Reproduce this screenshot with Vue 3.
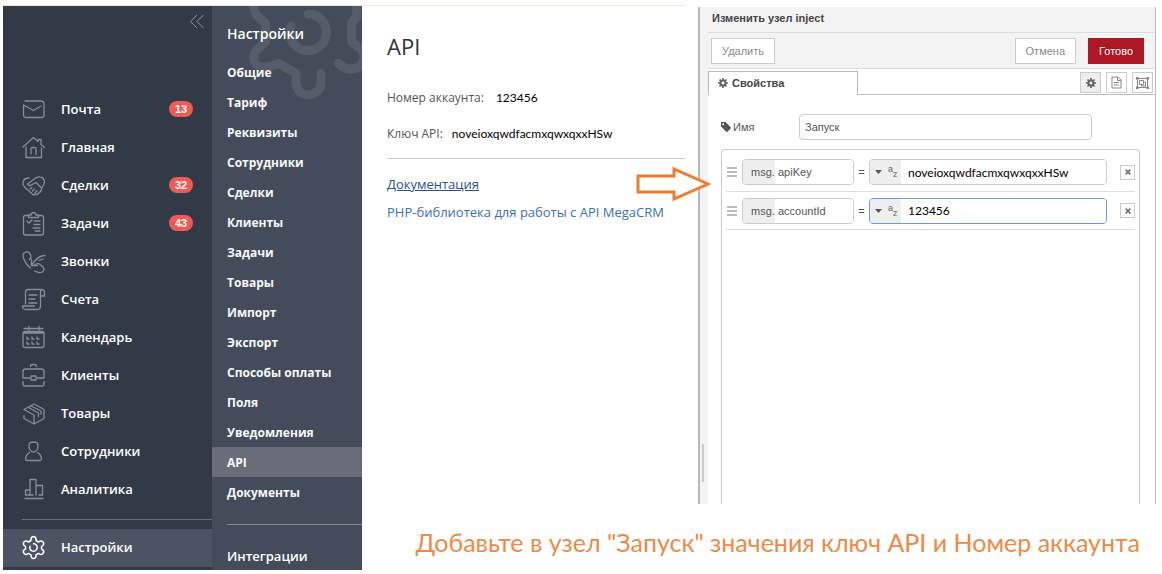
<script setup>
import { ref } from 'vue'

const menu = [
  { label: 'Почта', badge: 13, paths: ['M4 4h16q3 0 3 3v11q0 2.500-2.500 2.500H5Q2.500 20.500 2.500 18V8l10 5.500L20 9'] },
  { label: 'Главная', paths: ['M2 12 12.500 2.500 17 6.500V4.500h3v5l3.500 3', 'M5 12v10.500h15.500V13', 'M10 19v-5q0-1.500 1.500-1.500h2q1.500 0 1.500 1.500v5.500'] },
  { label: 'Сделки', badge: 32, paths: ['M8 5Q3 5 2 9q-.5 3 2 5.500L12.500 22l1.500-1', 'M12 7 6.500 11q1 2 3 1.300L15 9.500l5.500 5.500q3-3 3-6.500-.5-4-4.500-4.500-3-.5-7 3', 'M9 16l2-1.500M11.500 18l2-2M14 20l2-2.500M14.500 21.500q1.500 1 2-.8 1.500.3 1.800-1.500 1.600 0 1.500-1.800 1.500-.4.700-2.400'] },
  { label: 'Задачи', badge: 43, paths: ['M7 4.500H4.500q-2 0-2 2V22q0 2 2 2h16q2 0 2-2V6.500q0-2-2-2H18', 'M7.500 6.500V4H10Q10.500 1.500 12.500 1.500T15 4h2.500v2.500zM6 10l2 2 3-3M13 10h6M13 13.500h6M12 17h7M14 20h5'] },
  { label: 'Звонки', paths: ['M8.500 10.500 10 8.500Q10.500 7 8 3.500 6 2 3 4 1.500 5.500 2.500 9 4.500 15 9.500 19M13.500 22q5 2.500 8 1 2.500-2.500.500-5l-3.500-3q-2-1-4.500.5', 'M24 6.500Q17 6.500 11 15.500M10.500 10.500v6h6M18 11.500l4-1.500'] },
  { label: 'Счета', paths: ['M4.500 17V5q0-2.500 2.500-2.500h13q3.500 0 3.500 3v3.500h-4V5q0-2 1.500-2.500', 'M19.500 9v9.500q0 4-3 4H5q-3.500 0-3.500-3.500h12M8 8h8M8 12h6M8 16h8'] },
  { label: 'Календарь', paths: ['M4 6.500h17q2 0 2 2v12q0 2-2 2H4q-2 0-2-2v-12q0-2 2-2zM8 1.500V5M18 1.500V5M3 3.500h19M2 8h21', 'M6 12v2h2M11 12v2h2M16 12v2h2M6 17v2h2M11 17v2h2M16 17v2h2'] },
  { label: 'Клиенты', paths: ['M9 15H2V8.500q0-2.500 2.500-2.500h16Q23 6 23 8.500V15h-7', 'M10 13h5v4h-5zM2 18.500V21q0 2 2 2h17q2 0 2-2v-2.500M9.500 3.500q0-2 2-2h2q2 0 2 2'] },
  { label: 'Товары', paths: ['M3 14.500v3L13 23l10-5.500V8.500L13 3 3 8.500 13 14v9', 'M7.500 6.500 17.500 12v3.500M10 5l10 5v3'] },
  { label: 'Сотрудники', paths: ['M8.500 4q4-2 8 0 1.500 6-2 8.500-2 1-4 0-3.500-2.500-2-8.500z', 'M8.500 13.500Q5 15.500 4.500 20q0 1.500 1.500 1.500h13q1.500 0 1.500-1.500-.5-4.500-4-6.500'] },
  { label: 'Аналитика', paths: ['M9 18V2.500h6V18M9 8.500V18M9 13H4.500v5H12M15 8.500h6.500V18H18M4 21.500h18'] },
]
const sections = ['Общие', 'Тариф', 'Реквизиты', 'Сотрудники', 'Сделки', 'Клиенты', 'Задачи', 'Товары', 'Импорт', 'Экспорт', 'Способы оплаты', 'Поля', 'Уведомления', 'API', 'Документы']
const nodeName = ref('Запуск')
const props = ref([
  { key: 'apiKey', value: 'noveioxqwdfacmxqwxqxxHSw' },
  { key: 'accountId', value: '123456', focused: true },
])
</script>

<template>
  <div class="page">
    <aside class="sidebar">
      <button class="collapse" type="button" aria-label="Свернуть меню">
        <svg width="16" height="16" viewBox="0 0 16 16"><path d="M8 1 1.500 7.500 8 14M14.500 1 8 7.500l6.500 6.500" /></svg>
      </button>
      <nav class="menu">
        <a v-for="m in menu" :key="m.label" href="#" class="menu-item">
          <svg class="icon" width="25" height="25" viewBox="0 0 25 25"><path v-for="p in m.paths" :key="p" :d="p" /></svg>
          <span class="label">{{ m.label }}</span>
          <span v-if="m.badge" class="badge">{{ m.badge }}</span>
        </a>
        <hr class="menu-line" />
        <a href="#" class="menu-item current">
          <svg class="icon" width="25" height="25" viewBox="0 0 25 25">
            <path d="M10 4q.5-2.500 2.500-2.500T15 4v1.500l2.500 1.500 1.500-.8q2-.9 3.200 1t-.4 3.300L20.500 11.500v2.500l1.300.9q1.600 1.400.4 3.300t-3.200 1l-1.500-.8L15 19.900v1.500Q14.500 23.500 12.500 23.500T10 21.400v-1.500l-2.500-1.500-1.500.8q-2 .9-3.200-1t.4-3.300l1.300-.9v-2.500l-1.300-1q-1.600-1.400-.4-3.300t3.200-1l1.500.8L10 5.500z" />
            <path d="M12.500 8.800a3.700 3.700 0 1 1-3.500 2.500" />
          </svg>
          <span class="label">Настройки</span>
        </a>
      </nav>
    </aside>

    <nav class="submenu">
      <svg class="gear" width="150" height="94" viewBox="6 18 450 282">
        <path d="M130 5Q130 40 148 54L167 70V125L148 142Q120 165 138 193Q158 212 205 190L258 220V250Q262 284 295 284Q330 282 333 250V220M440 5V50L425 68V125L450 145Q475 165 452 198Q415 220 385 190M295 42A55 55 0 1 1 243 77" />
      </svg>
      <h2>Настройки</h2>
      <a v-for="s in sections" :key="s" href="#" class="sub-item" :class="{ active: s === 'API' }">{{ s }}</a>
      <hr />
      <a href="#" class="sub-item wide">Интеграции</a>
    </nav>

    <div class="main">
      <div class="work">
        <section class="account">
          <h1>API</h1>
          <p><span class="name">Номер аккаунта:</span><span class="code first">123456</span></p>
          <p><span class="name">Ключ API:</span><span class="code">noveioxqwdfacmxqwxqxxHSw</span></p>
          <hr />
          <a href="#" class="doc underlined">Документация</a>
          <a href="#" class="doc">PHP-библиотека для работы с API MegaCRM</a>
        </section>

        <section class="panel">
          <svg class="arrow" width="80" height="36" viewBox="0 0 80 36"><path d="M2 10H38V3L72 18 38 33V26H2z" /></svg>
          <div class="grip"><i></i></div>
          <div class="editor">
            <header>Изменить узел inject</header>
            <div class="toolbar">
              <button type="button" class="btn">Удалить</button>
              <span class="space"></span>
              <button type="button" class="btn">Отмена</button>
              <button type="button" class="btn primary">Готово</button>
            </div>
            <div class="tabs">
              <button type="button" class="tab">
                <svg width="10" height="10" viewBox="0 0 12 12"><circle class="ring" cx="6" cy="6" r="3" /><path class="teeth" d="M6 0v2.500M6 9.500V12M0 6h2.500M9.500 6H12M1.800 1.800l1.700 1.700M8.500 8.500l1.700 1.700M1.800 10.200l1.700-1.700M8.500 3.500l1.700-1.700" /></svg>
                Свойства
              </button>
              <div class="tools">
                <button type="button" class="tool on" aria-label="Свойства">
                  <svg width="10" height="10" viewBox="0 0 12 12"><circle class="ring" cx="6" cy="6" r="3" /><path class="teeth" d="M6 0v2.500M6 9.500V12M0 6h2.500M9.500 6H12M1.800 1.800l1.700 1.700M8.500 8.500l1.700 1.700M1.800 10.200l1.700-1.700M8.500 3.500l1.700-1.700" /></svg>
                </button>
                <button type="button" class="tool" aria-label="Описание">
                  <svg width="11" height="13" viewBox="0 0 11 13"><path class="thin" d="M1 1h6l3 3v8H1zM6.500 1v3.500H10M3 6.500h5M3 9h5" /></svg>
                </button>
                <button type="button" class="tool" aria-label="Внешний вид">
                  <svg width="13" height="12" viewBox="0 0 13 12"><path class="thin" d="M1.500 1.500h10v9h-10zM3.500 3.500h4v4h-4zM7.500 5h2v4h-4V7.500" /><path class="dots" d="M0 0h2.500v2.500H0zM10.500 0H13v2.500h-2.500zM0 9.500h2.500V12H0zM10.500 9.500H13V12h-2.500z" /></svg>
                </button>
              </div>
            </div>
            <form class="form" @submit.prevent>
              <div class="name-row">
                <label for="node-name">
                  <svg width="10" height="10" viewBox="0 0 10 10"><path fill-rule="evenodd" d="M0 1q0-1 1-1h3.500L9.700 5.200q.5.600 0 1.200L6.400 9.700q-.6.500-1.200 0L0 4.500zM2.200 1.200a1 1 0 1 0 0 2 1 1 0 0 0 0-2z" /></svg>
                  Имя
                </label>
                <input id="node-name" v-model="nodeName" type="text" />
              </div>
              <div class="props">
                <div v-for="(p, i) in props" :key="p.key" class="prop">
                  <span class="handle"><i></i><i></i><i></i></span>
                  <div class="field key">
                    <span class="prefix">msg.</span>
                    <input v-model="p.key" type="text" :aria-label="'Свойство ' + (i + 1)" />
                  </div>
                  <span class="eq">=</span>
                  <div class="field value" :class="{ focused: p.focused }">
                    <button type="button" class="type" aria-label="Тип: строка">
                      <svg width="7" height="4" viewBox="0 0 7 4"><path d="M0 0h7L3.500 4z" /></svg>
                      <span class="az"><span>a</span><span>z</span></span>
                    </button>
                    <input v-model="p.value" type="text" :aria-label="'Значение ' + (i + 1)" />
                  </div>
                  <button type="button" class="remove" aria-label="Удалить свойство">
                    <svg width="6" height="6" viewBox="0 0 6 6"><path d="M.7.7l4.600 4.600M5.300.7.700 5.300" /></svg>
                  </button>
                </div>
              </div>
            </form>
          </div>
        </section>
      </div>
      <p class="caption">Добавьте в узел "Запуск" значения ключ API и Номер аккаунта</p>
    </div>
  </div>
</template>

<style>
body { background: #fff; }
</style>

<style scoped>
* { box-sizing: border-box; }
a { text-decoration: none; }
button, input { font: inherit; color: inherit; margin: 0; padding: 0; }
hr { border: 0; margin: 0; }
.page {
  display: grid;
  grid-template-columns: 209px 150px minmax(0, 1fr);
  padding: 5px 6px 4px 3px;
  font-family: "Open Sans", "Noto Sans", sans-serif;
}
.sidebar, .submenu, .account { border-top: 1px solid #f3e8d2; }
.sidebar { background: #333a47; color: #f7f8fa; display: flex; flex-direction: column; padding-bottom: 3px; }
.collapse { align-self: flex-end; height: 85px; padding: 8px 7px 0 0; border: 0; background: none; display: flex; }
.collapse svg { fill: none; stroke: #8a93a1; stroke-width: 1; }
.menu { display: flex; flex-direction: column; }
.menu-item { height: 38px; display: flex; align-items: center; padding: 0 19px 2px 18px; color: #fff; font-size: 13px; font-weight: 600; }
.icon { fill: none; stroke: #858e9b; stroke-width: 1.300; stroke-linecap: round; stroke-linejoin: round; margin-right: 15px; flex: none; }
.label { flex: 1; }
.badge { width: 24px; height: 16px; border-radius: 8px; background: #f05a55; font: 700 11px/16px "Liberation Sans", sans-serif; text-align: center; }
.menu-line { height: 1px; background: #686f7b; margin: 10px 0 9px 19px; }
.current { background: #4c5464; }
.current .icon { stroke: #fff; stroke-width: 1.500; }

.submenu { position: relative; background: #444b5a; display: flex; flex-direction: column; }
.gear { position: absolute; top: 0; left: 0; fill: none; stroke: #565d6a; stroke-width: 27; stroke-linecap: round; stroke-linejoin: round; }
.submenu h2 { position: relative; margin: 0; height: 51px; padding: 2px 15px 0; font-size: 14px; line-height: 51px; font-weight: 600; color: #fff; }
.sub-item { position: relative; height: 30px; line-height: 32px; padding: 0 15px; font-size: 12px; font-weight: 700; color: #f7f8fa; }
.sub-item.active { background: #686d78; }
.sub-item.wide { font-size: 13px; font-weight: 600; color: #fff; }
.submenu hr { height: 1px; background: #858a94; margin: 17px 0 15px 15px; }

.main { display: flex; flex-direction: column; min-width: 0; }
.work { flex: 1; display: grid; grid-template-columns: minmax(0, 336fr) minmax(0, 458fr); }
.account { margin-right: 13px; padding: 23px 0 0 25px; display: flex; flex-direction: column; }
.account h1 { margin: 0 0 25px; font-size: 22px; line-height: 34px; font-weight: 400; color: #333; }
.account p { margin: 0 0 16px; font-size: 12px; line-height: 20px; display: flex; color: #555; }
.account .code { color: #000; margin-left: 9px; font-family: Lato, "Open Sans", sans-serif; }
.account .first { margin-left: 12px; }
.account hr { height: 1px; background: #c5c9cd; margin: -2px 0 15px; }
.doc { align-self: flex-start; color: #3a6fc0; font-size: 13px; line-height: 20px; margin-bottom: 8px; white-space: nowrap; }
.underlined { color: #2b4f94; text-decoration: underline; }

.panel { position: relative; margin-top: 2px; border-left: 2px solid #b8b8b8; border-right: 1px solid #bbb; display: flex; font: 11px "Liberation Sans", sans-serif; color: #555; }
.arrow { position: absolute; left: -64px; top: 159px; fill: #fff; stroke: #ed7d31; stroke-width: 3; z-index: 1; }
.grip { width: 8px; background: #f3f3f3; display: flex; align-items: flex-end; padding: 0 0 22px 2px; }
.grip i { width: 2px; height: 38px; background: #ccc; }
.editor { flex: 1; min-width: 0; display: flex; flex-direction: column; }
header { background: #f3f3f3; height: 26px; line-height: 23px; padding-left: 4px; font-weight: 700; color: #444; border-bottom: 1px solid #ddd; }
.toolbar { background: #f3f3f3; height: 36px; display: flex; align-items: center; padding: 0 11px 0 3px; border-bottom: 1px solid #ddd; }
.space { flex: 1; }
.btn { height: 26px; padding: 0 10px; border: 1px solid #ccc; background: #fff; color: #888; }
.btn.primary { margin-left: 12px; background: #ad1625; border-color: #ad1625; color: #fff; }
.tabs { height: 26px; padding-top: 2px; display: flex; justify-content: space-between; border-bottom: 1px solid #bbb; }
.tab { width: 150px; height: 24px; border: 1px solid #bbb; border-bottom: 0; background: #fff; display: flex; align-items: center; gap: 4px; padding: 0 0 2px 9px; font-weight: 700; color: #444; }
.ring { fill: none; stroke: #666; stroke-width: 2.500; }
.teeth { fill: none; stroke: #666; stroke-width: 2; }
.tools { display: flex; gap: 5px; padding: 1px 2px 0 0; }
.tool { width: 21px; height: 21px; border: 1px solid #ccc; background: #fff; display: grid; place-items: center; }
.tool.on { background: #eee; }
.thin { fill: none; stroke: #888; stroke-width: 1; }
.dots { fill: #888; }
.form { flex: 1; display: flex; flex-direction: column; padding: 19px 15px 0 13px; }
.name-row { display: flex; align-items: center; padding-right: 48px; margin-bottom: 9px; }
.name-row label { width: 78px; display: flex; gap: 2px; align-items: center; }
.name-row label svg { fill: #555; }
.name-row input { flex: 1; min-width: 0; height: 26px; border: 1px solid #ccc; border-radius: 4px; padding: 0 5px; }
.props { flex: 1; border: 1px solid #ccc; border-bottom: 0; border-radius: 4px 4px 0 0; padding: 3px 4px 0; }
.prop { height: 38px; display: flex; align-items: center; border-bottom: 1px solid #ddd; }
.prop:first-child { height: 39px; }
.handle { width: 16px; padding-left: 1px; display: grid; gap: 2px; }
.handle i { width: 10px; height: 2px; background: #bbb; }
.field { height: 26px; display: flex; border: 1px solid #ccc; border-radius: 4px; overflow: hidden; background: #fff; }
.field.focused { border-color: #6a9bd8; }
.field input { flex: 1; min-width: 0; border: 0; padding-left: 3px; outline: 0; }
.key { width: 112px; flex: none; }
.prefix { width: 32px; background: #eee; line-height: 24px; padding-left: 8px; }
.eq { width: 15px; text-align: center; }
.value { flex: 1; }
.value input { font: 12px Lato, "Open Sans", sans-serif; color: #000; padding-left: 7px; }
.type { width: 31px; border: 0; background: #eee; display: flex; align-items: center; padding-left: 5px; gap: 6px; }
.type svg { fill: #555; }
.az { display: flex; font-size: 9px; line-height: 9px; color: #666; }
.az span:last-child { padding-top: 5px; }
.remove { width: 15px; height: 15px; margin-left: 13px; border: 1px solid #ccc; background: #fff; display: grid; place-items: center; }
.remove svg { fill: none; stroke: #777; stroke-width: 1.800; }

.caption { margin: 0; height: 66px; padding: 0 16px 0 0; text-align: right; white-space: nowrap; font: 25px/76px Lato, "Open Sans", sans-serif; color: #ed8a45; }
</style>
